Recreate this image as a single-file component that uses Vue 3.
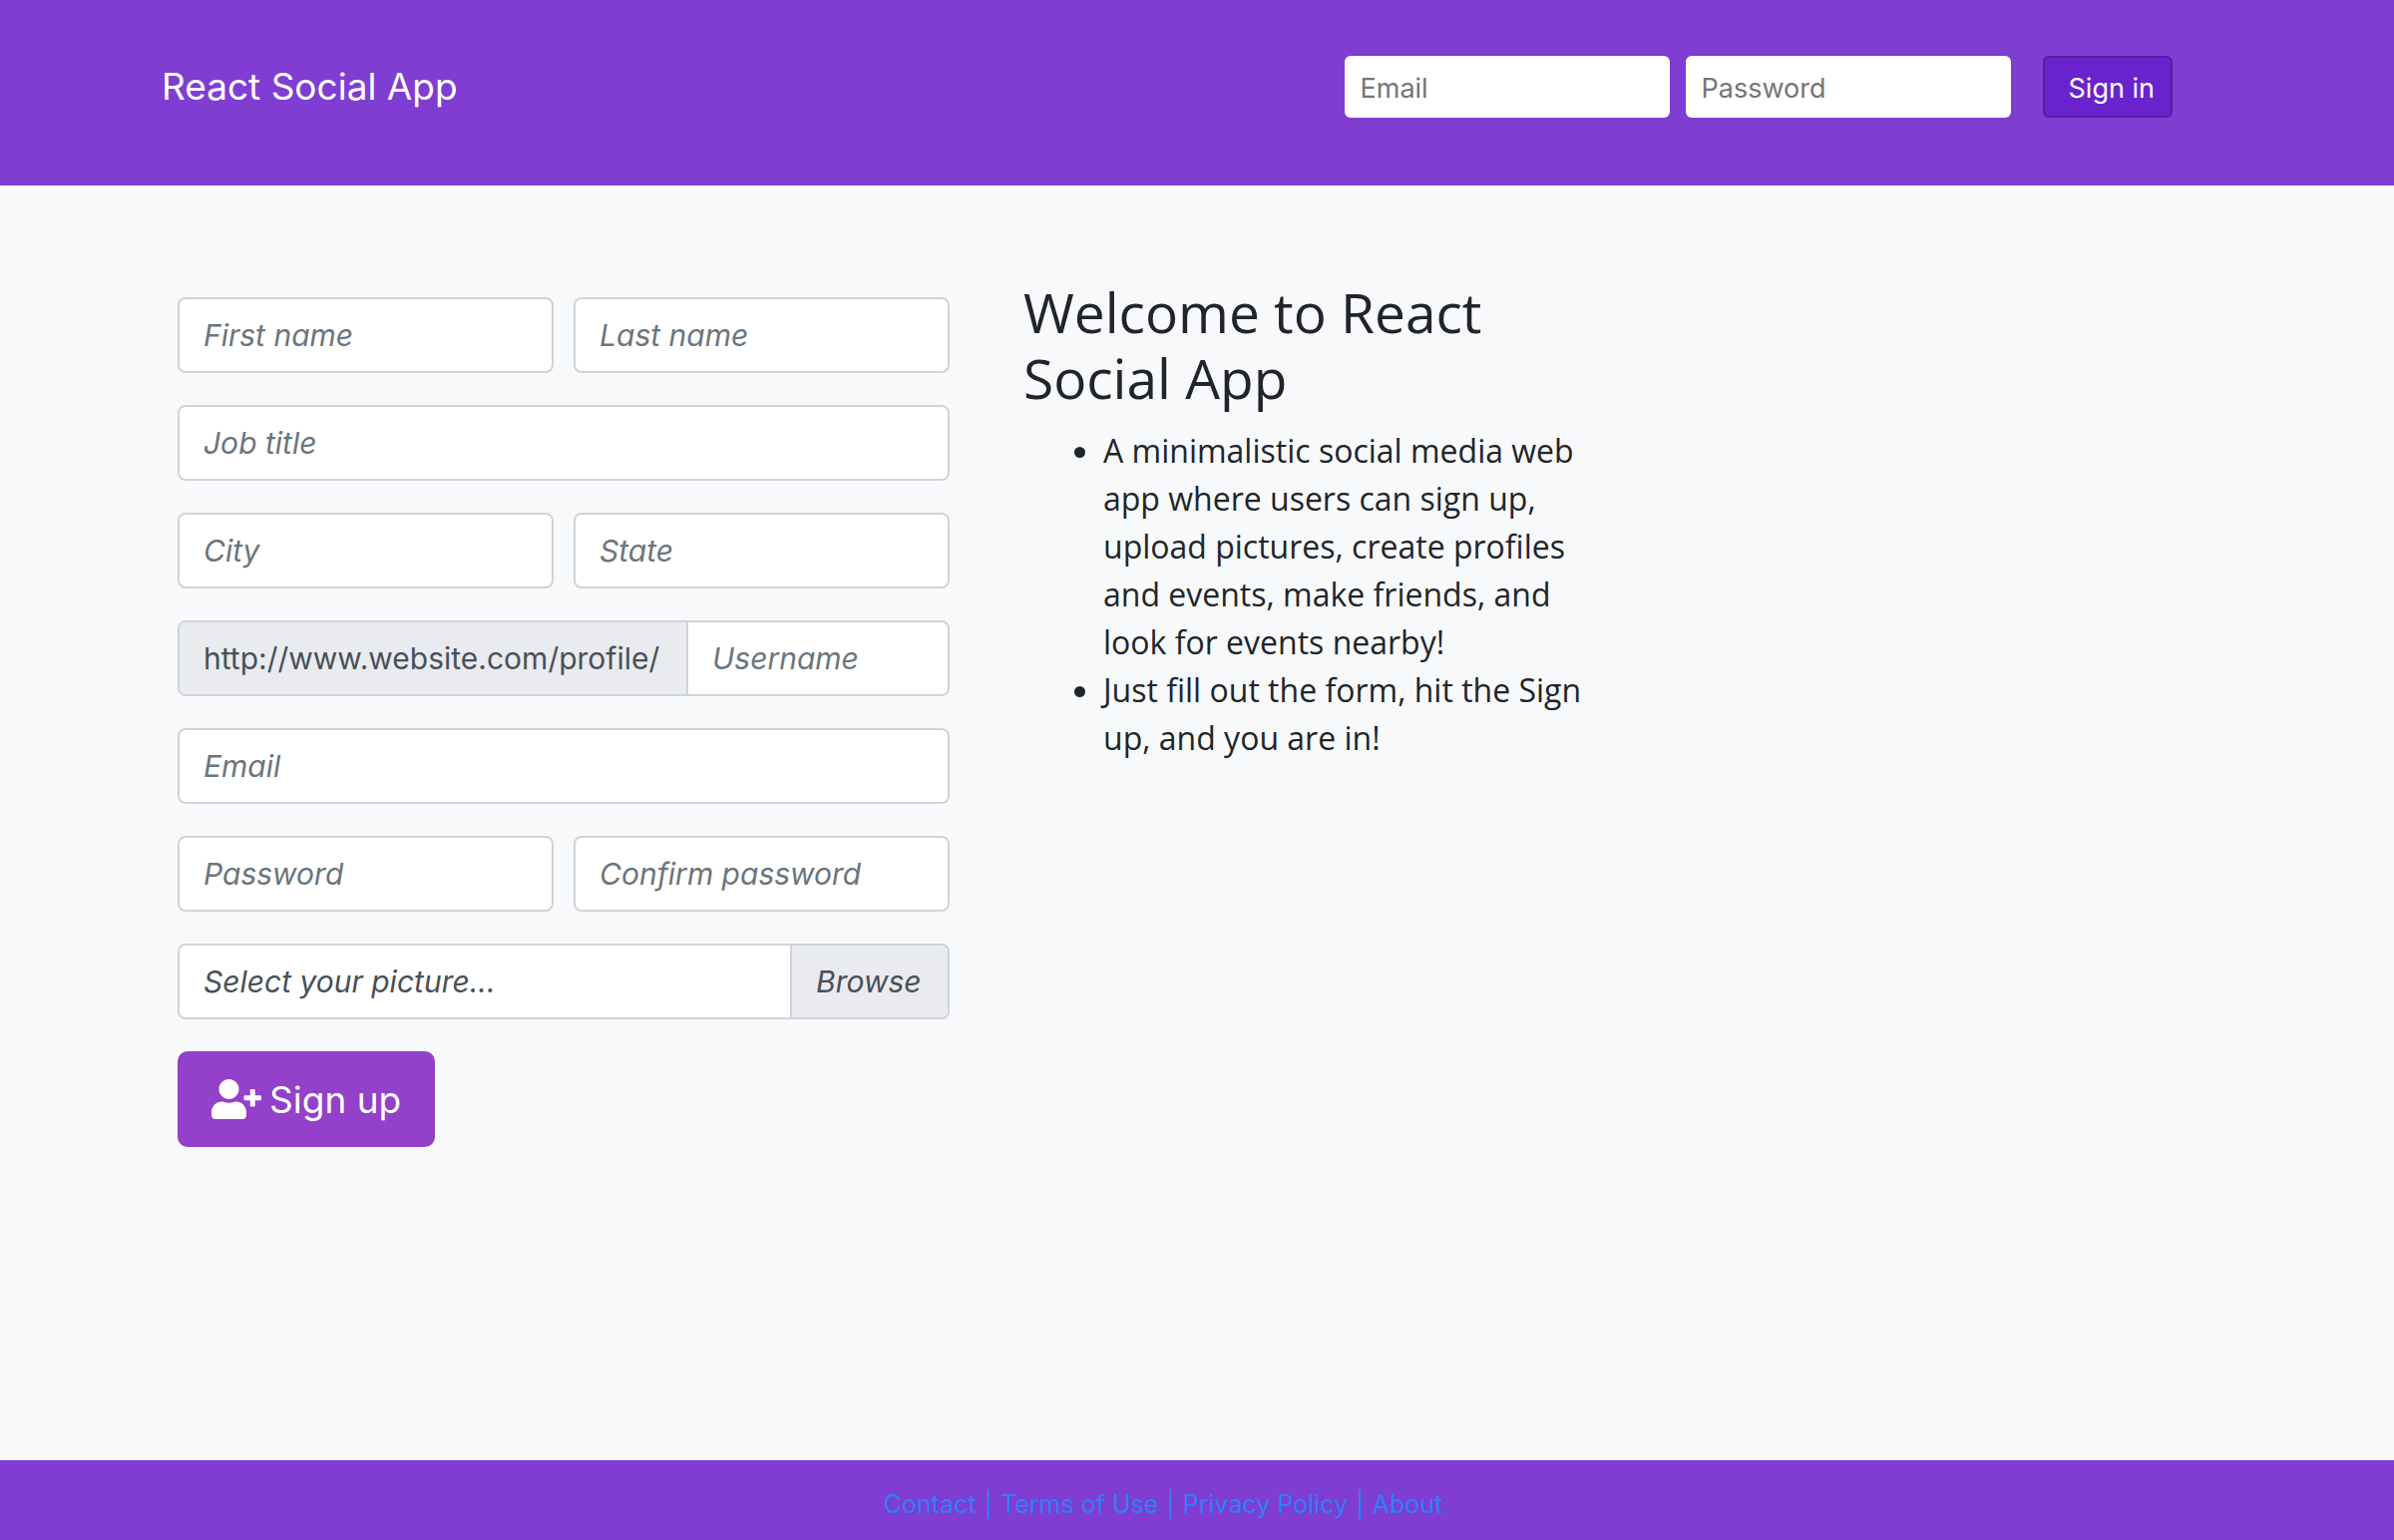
<script setup>
import { ref } from 'vue'

const rows = [
  [
    { name: 'firstName', label: 'First name', type: 'text' },
    { name: 'lastName', label: 'Last name', type: 'text' },
  ],
  [{ name: 'jobTitle', label: 'Job title', type: 'text' }],
  [
    { name: 'city', label: 'City', type: 'text' },
    { name: 'state', label: 'State', type: 'text' },
  ],
  [{ name: 'username', label: 'Username', type: 'text', prefix: 'http://www.website.com/profile/' }],
  [{ name: 'email', label: 'Email', type: 'email' }],
  [
    { name: 'password', label: 'Password', type: 'password' },
    { name: 'confirmPassword', label: 'Confirm password', type: 'password' },
  ],
]

const features = [
  'A minimalistic social media web app where users can sign up, upload pictures, create profiles and events, make friends, and look for events nearby!',
  'Just fill out the form, hit the Sign up, and you are in!',
]

const links = ['Contact', 'Terms of Use', 'Privacy Policy', 'About']

const fileName = ref('Select your picture...')
function onPick(event) {
  const file = event.target.files[0]
  if (file) fileName.value = file.name
}
</script>

<template>
  <div class="page">
    <header class="header">
      <a class="brand" href="#">React Social App</a>
      <form class="signin" @submit.prevent>
        <input class="signin-input" type="email" placeholder="Email" aria-label="Email" />
        <input class="signin-input" type="password" placeholder="Password" aria-label="Password" />
        <button class="signin-button" type="submit">Sign in</button>
      </form>
    </header>

    <main class="main">
      <form class="signup" @submit.prevent>
        <div v-for="(row, i) in rows" :key="i" class="row">
          <div v-for="field in row" :key="field.name" class="field">
            <label v-if="field.prefix" class="prefix" :for="field.name">{{ field.prefix }}</label>
            <input
              :id="field.name"
              class="input"
              :type="field.type"
              :placeholder="field.label"
              :aria-label="field.label"
            />
          </div>
        </div>
        <label class="field file" for="picture">
          <input id="picture" class="file-input" type="file" accept="image/*" @change="onPick" />
          <span class="file-name">{{ fileName }}</span>
          <span class="browse">Browse</span>
        </label>
        <button class="signup-button" type="submit">
          <svg class="icon" viewBox="0 0 640 512" aria-hidden="true">
            <path
              fill="currentColor"
              d="M624 208h-64v-64c0-8.800-7.200-16-16-16h-32c-8.800 0-16 7.200-16 16v64h-64c-8.800 0-16 7.200-16 16v32c0 8.800 7.200 16 16 16h64v64c0 8.800 7.200 16 16 16h32c8.800 0 16-7.200 16-16v-64h64c8.800 0 16-7.200 16-16v-32c0-8.800-7.200-16-16-16zm-400 48c70.700 0 128-57.300 128-128S294.700 0 224 0 96 57.300 96 128s57.300 128 128 128zm89.600 32h-16.700c-22.200 10.200-46.900 16-72.900 16s-50.600-5.800-72.900-16h-16.700C60.200 288 0 348.200 0 422.400V464c0 26.500 21.500 48 48 48h352c26.500 0 48-21.500 48-48v-41.600c0-74.200-60.200-134.400-134.400-134.400z"
            />
          </svg>
          <span>Sign up</span>
        </button>
      </form>

      <section class="welcome">
        <h1>Welcome to React Social App</h1>
        <ul>
          <li v-for="feature in features" :key="feature">{{ feature }}</li>
        </ul>
      </section>
    </main>

    <footer class="footer">
      <nav>
        <template v-for="(link, i) in links" :key="link">
          <span v-if="i" class="divider"> | </span><a href="#">{{ link }}</a>
        </template>
      </nav>
    </footer>
  </div>
</template>

<style>
body {
  margin: 0;
}
</style>

<style scoped>
.page,
.page * {
  box-sizing: border-box;
}
.page {
  display: flex;
  flex-direction: column;
  min-height: 100vh;
  background: #f8f9fb;
  color: #212529;
  font-family: Inter, 'Liberation Sans', sans-serif;
}
input,
button {
  margin: 0;
  font: inherit;
}

.header {
  display: flex;
  justify-content: space-between;
  align-items: center;
  padding: 56px 222px 68px 162px;
  background: #7f3dd1;
}
.brand {
  color: #fff;
  font-size: 37px;
  line-height: 60px;
  text-decoration: none;
}
.signin {
  display: flex;
  gap: 16px;
  font-size: 27px;
}
.signin-input {
  width: 326px;
  height: 62px;
  padding: 2px 16px 0;
  border: 0;
  border-radius: 6px;
  background: #fff;
}
.signin-input::placeholder {
  color: #757575;
}
.signin-button {
  height: 62px;
  margin-left: 16px;
  padding: 2px 16px 0 24px;
  border: 2px solid #581ca5;
  border-radius: 6px;
  background: #6a23cc;
  color: #fff;
}

.main {
  display: flex;
  flex: 1;
  align-items: flex-start;
  gap: 74px;
  padding: 94px 178px 64px;
}
.signup {
  display: flex;
  flex-direction: column;
  align-items: flex-start;
  gap: 32px;
  width: 774px;
  padding-top: 18px;
  font-size: 30px;
}
.row {
  display: flex;
  gap: 20px;
  width: 100%;
}
.field {
  display: flex;
  flex: 1;
  min-width: 0;
  height: 76px;
  border: 2px solid #ced4da;
  border-radius: 8px;
  background: #fff;
  overflow: hidden;
}
.input {
  flex: 1;
  width: 0;
  min-width: 0;
  padding: 0 24px;
  border: 0;
  background: transparent;
  color: #495057;
  font-style: italic;
}
.input::placeholder {
  color: #6c757d;
  opacity: 1;
}
.prefix,
.browse {
  padding: 0 24px;
  background: #e9ebef;
  color: #495057;
  line-height: 72px;
}
.prefix {
  min-width: 510px;
  border-right: 2px solid #ced4da;
}
.file {
  flex: none;
  position: relative;
  width: 100%;
  color: #495057;
  font-style: italic;
}
.file-input {
  position: absolute;
  inset: 0;
  opacity: 0;
}
.file-name {
  flex: 1;
  padding-left: 24px;
  line-height: 72px;
}
.browse {
  min-width: 158px;
  border-left: 2px solid #ced4da;
}
.signup-button {
  display: flex;
  align-items: center;
  gap: 8px;
  height: 96px;
  padding: 0 34px;
  border: 0;
  border-radius: 10px;
  background: #9340cb;
  color: #fff;
  font-size: 37px;
}
.icon {
  width: 50px;
  height: 40px;
}

.welcome {
  max-width: 576px;
  font-family: 'Trebuchet MS', 'Open Sans', sans-serif;
}
h1 {
  margin: 0 0 16px;
  font-size: 55px;
  font-weight: 400;
  line-height: 66px;
}
ul {
  margin: 0;
  padding-left: 80px;
  font-size: 32px;
  line-height: 48px;
}

.footer {
  display: flex;
  justify-content: center;
  padding: 24px 68px 16px 0;
  background: #7f3dd1;
  color: #2f7ff7;
  font-size: 25px;
  line-height: 40px;
}
.footer a {
  color: inherit;
  text-decoration: none;
}
.divider {
  margin: 0 1px;
}
</style>
